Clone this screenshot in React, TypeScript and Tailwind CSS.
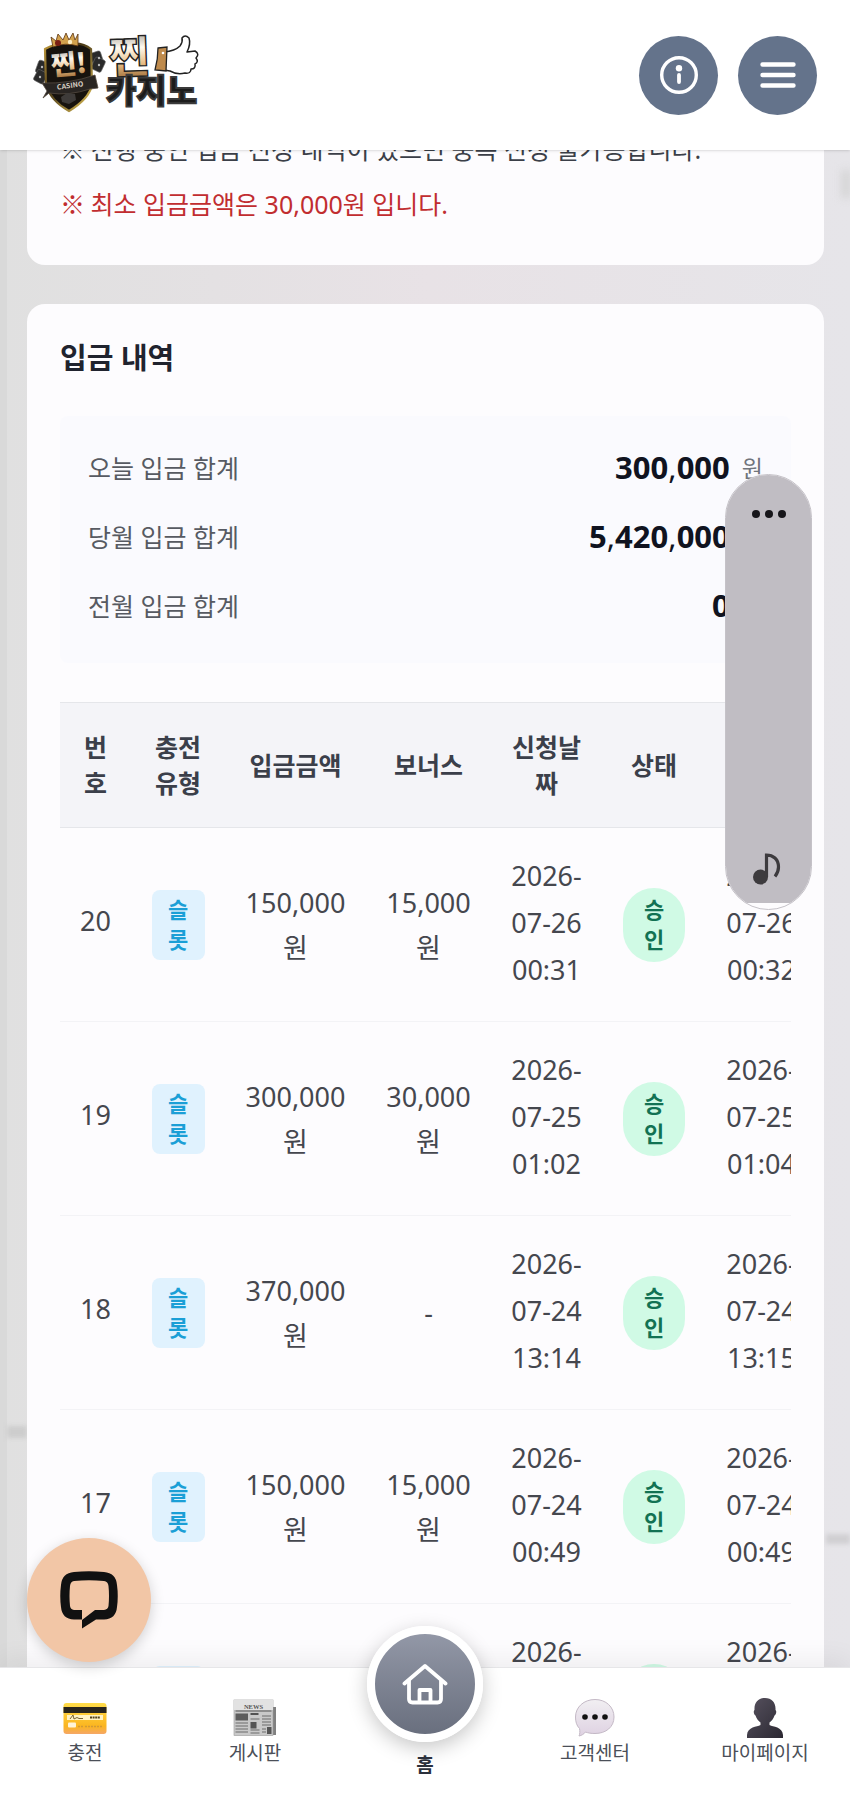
import type { ReactNode } from 'react'

const sans = "font-['Noto_Sans','Noto_Sans_CJK_KR',sans-serif]"
const heavy = "font-['Noto_Sans_CJK_KR',sans-serif]"

type Row = { no: number; amount: string; bonus: string; asked: string[]; done: string[] }

const rows: Row[] = [
  { no: 20, amount: '150,000', bonus: '15,000', asked: ['2026-', '07-26', '00:31'], done: ['2026-', '07-26', '00:32'] },
  { no: 19, amount: '300,000', bonus: '30,000', asked: ['2026-', '07-25', '01:02'], done: ['2026-', '07-25', '01:04'] },
  { no: 18, amount: '370,000', bonus: '', asked: ['2026-', '07-24', '13:14'], done: ['2026-', '07-24', '13:15'] },
  { no: 17, amount: '150,000', bonus: '15,000', asked: ['2026-', '07-24', '00:49'], done: ['2026-', '07-24', '00:49'] },
  { no: 16, amount: '150,000', bonus: '15,000', asked: ['2026-', '07-23', '00:21'], done: ['2026-', '07-23', '00:22'] },
]

const totals = [
  { label: '오늘 입금 합계', value: '300,000' },
  { label: '당월 입금 합계', value: '5,420,000' },
  { label: '전월 입금 합계', value: '0' },
]

function Logo() {
  return (
    <svg width="170" height="88" viewBox="0 0 170 88" role="img" aria-label="찐카지노">
      <defs>
        <linearGradient id="gold" x1="0" y1="0" x2="0" y2="1">
          <stop offset="0.2" stopColor="#b9b4ac" />
          <stop offset="0.4" stopColor="#fffaf0" />
          <stop offset="0.65" stopColor="#e6bd86" />
          <stop offset="0.9" stopColor="#9c6a35" />
        </linearGradient>
        <linearGradient id="rim" x1="0" y1="0" x2="1" y2="1">
          <stop offset="0" stopColor="#c09a3c" />
          <stop offset="0.4" stopColor="#4a3a17" />
          <stop offset="1" stopColor="#e6c65a" />
        </linearGradient>
      </defs>
      <g fill="#2a2a2a" stroke="#666" strokeWidth="0.6">
        <rect x="4" y="30" width="11" height="13" rx="2" transform="rotate(20 9 36)" />
        <rect x="2" y="40" width="11" height="12" rx="2" transform="rotate(28 8 46)" />
        <rect x="58" y="21" width="11" height="13" rx="2" transform="rotate(-18 63 27)" />
        <rect x="60" y="27" width="11" height="13" rx="2" transform="rotate(25 65 33)" />
      </g>
      <g fill="#bbb">
        <circle cx="9" cy="36" r="1.200" />
        <circle cx="7" cy="46" r="1.200" />
        <circle cx="66" cy="27" r="1.200" />
        <circle cx="66" cy="34" r="1.200" />
      </g>
      <path d="M12 18 Q24 11 36 13 Q50 11 58 18 L59 54 Q56 68 36 80 Q18 70 13 54 Z" fill="#17130e" stroke="url(#rim)" strokeWidth="2.200" />
      <path d="M20 16 L18 6 L23 10 L25 3 L30 9 L33 2 L36 9 L40 2 L42 9 L45 3 L45 15 Q32 11 20 16 Z" fill="#d3a24d" stroke="#5b3311" strokeWidth="0.8" />
      <circle cx="25" cy="12" r="3" fill="#7a1e14" />
      <circle cx="37" cy="11" r="2.200" fill="#fff0c5" />
      <text x="36" y="43" textAnchor="middle" fontSize="27" fontWeight="900" fill="url(#gold)" className={heavy} transform="rotate(-5 36 36)">찐!</text>
      <path d="M9 52 Q36 53 62 44 L65 57 L57 58 Q36 65 16 62 L10 67 L14 60 Z" fill="#292522" stroke="#544a40" strokeWidth="0.8" />
      <text x="37" y="57" textAnchor="middle" fontSize="7" fontWeight="700" fill="#d8cfc2" className={heavy} transform="rotate(-8 37 54)">CASINO</text>
      <path d="M28 66 L34 62 L42 63 L43 69 L36 73 L29 71 Z" fill="#3e3b39" />
      <text x="76" y="42" fontSize="44" fontWeight="900" fill="url(#gold)" stroke="#222" strokeWidth="1.400" className={heavy} transform="rotate(-2 97 25)">찐</text>
      <g transform="translate(0 3)">
        <path d="M131 18 Q142 17 147 12 Q150 8 149 4 Q152 0 156 4 Q158 10 154 18 L162 17 Q167 20 163 24 Q166 28 162 30 Q163 35 158 35 Q158 40 152 39 Q144 41 137 37 L131 36 Z" fill="#fff" stroke="#222" strokeWidth="1.500" strokeLinejoin="round" />
        <path d="M125 14 L134 13 L133 37 L122 36 Q125 25 125 14 Z" fill="#be8a4c" stroke="#222" strokeWidth="1.300" />
        <circle cx="130" cy="19" r="1.300" fill="#fff" />
      </g>
      <text x="73" y="72" fontSize="33" fontWeight="900" fill="#1c1c1c" stroke="#3a3a3a" strokeWidth="1.800" className={heavy}>카지노</text>
    </svg>
  )
}

function InfoIcon() {
  return (
    <svg width="40" height="40" viewBox="0 0 40 40" fill="none" stroke="#fff" aria-hidden="true">
      <circle cx="20" cy="20" r="17.3" strokeWidth="3.4" />
      <circle cx="20" cy="13.2" r="3.2" fill="#fff" stroke="none" />
      <path d="M20 20 V27" strokeWidth="3.8" strokeLinecap="round" />
    </svg>
  )
}

function MenuIcon() {
  return (
    <svg width="36" height="28" viewBox="0 0 36 28" stroke="#fff" strokeWidth="4.4" strokeLinecap="round" aria-hidden="true">
      <path d="M2.5 3.5 H33.5 M2.5 14 H33.5 M2.5 24.5 H33.5" />
    </svg>
  )
}

function CardIcon() {
  return (
    <svg width="44" height="40" viewBox="0 0 44 40" aria-hidden="true">
      <defs>
        <linearGradient id="card" x1="0" y1="0" x2="0" y2="1">
          <stop offset="0" stopColor="#ffdc4a" />
          <stop offset="0.75" stopColor="#fbb51f" />
          <stop offset="1" stopColor="#f5a768" />
        </linearGradient>
      </defs>
      <rect x="0.5" y="5" width="43" height="31" rx="3" fill="url(#card)" />
      <rect x="0.5" y="9" width="43" height="6" fill="#28241c" />
      <rect x="4" y="17" width="36" height="5" fill="#fff2c4" />
      <path d="M7 21 l3-4 l1 4 l3-1.5 l2 1 h4" fill="none" stroke="#6b5523" strokeWidth="0.9" />
      <path d="M27 19.5 h10" stroke="#54431c" strokeWidth="2" strokeDasharray="2 0.6" />
      <rect x="5" y="24.5" width="8" height="5" rx="1" fill="#fff4d8" />
      <path d="M15 28.5 h5 M22 28.5 h18" stroke="#d39a35" strokeWidth="1.6" strokeDasharray="2 1" />
    </svg>
  )
}

function NewsIcon() {
  return (
    <svg width="44" height="40" viewBox="0 0 44 40" aria-hidden="true">
      <path d="M37 9 h6 v28 h-6 z" fill="#808080" />
      <rect x="1" y="2" width="39" height="35.5" fill="#c9c9c9" stroke="#9a9a9a" strokeWidth="0.6" />
      <rect x="1" y="2" width="39" height="10" fill="#e2e2e2" />
      <text x="20.500" y="10.500" textAnchor="middle" fontSize="6.500" fontWeight="700" fill="#555" className="font-['Liberation_Serif',serif]">NEWS</text>
      <path d="M2.500 13 h36" stroke="#555" strokeWidth="1.2" />
      <rect x="2.500" y="15.500" width="12.500" height="7" fill="#5d5d5d" />
      <path d="M2.500 25 h12.500 M2.500 28 h12.500 M2.500 31 h12.500 M2.500 34 h12.500 M17.500 21 h9 M17.500 32 h9 M17.500 35 h9 M29 18 h9 M29 21 h9 M29 24 h9 M29 27 h9 M29 31 h4 M29 34 h4" stroke="#8b8b8b" strokeWidth="1.4" />
      <path d="M17.500 16 h8" stroke="#444" strokeWidth="1.8" />
      <rect x="17.500" y="24" width="6" height="6.500" fill="#555" />
      <rect x="34" y="29" width="4.500" height="7" fill="#555" />
    </svg>
  )
}

function TalkIcon() {
  return (
    <svg width="44" height="40" viewBox="0 0 44 40" aria-hidden="true">
      <defs>
        <linearGradient id="talk" x1="0" y1="0" x2="0" y2="1">
          <stop offset="0" stopColor="#f1eff2" />
          <stop offset="1" stopColor="#dfd2e2" />
        </linearGradient>
      </defs>
      <path d="M22 1.500 C33 1.500 41 9 41 19 C41 29 33 35.500 22 35.500 C18 35.500 15 35 12.500 34 C11 36 8.500 37.500 6 38 C7 36 7 33 6.500 30.500 C3.500 27.500 2.500 23.500 2.500 19 C2.500 9 11 1.500 22 1.500 Z" fill="url(#talk)" stroke="#c4b9c6" strokeWidth="1" />
      <circle cx="12" cy="19" r="2.800" fill="#111" />
      <circle cx="22" cy="19" r="2.800" fill="#111" />
      <circle cx="32" cy="19" r="2.800" fill="#111" />
    </svg>
  )
}

function PersonIcon() {
  return (
    <svg width="44" height="40" viewBox="0 0 44 40" aria-hidden="true">
      <defs>
        <linearGradient id="person" x1="0" y1="0" x2="1" y2="1">
          <stop offset="0" stopColor="#57525f" />
          <stop offset="1" stopColor="#2b2832" />
        </linearGradient>
      </defs>
      <path d="M22 0 C29 0 33 5 32.500 12 C34 13 33 17 31.500 17.500 C30.500 21 28.500 23 26.500 24.500 V27 C30 29 39.500 28.500 40 37 V40 H4 V37 C4.500 28.500 14 29 17.500 27 V24.500 C15.500 23 13.500 21 12.500 17.500 C11 17 10 13 11.500 12 C11 5 15 0 22 0 Z" fill="url(#person)" />
    </svg>
  )
}

function HomeIcon() {
  return (
    <svg width="46" height="42" viewBox="0 0 46 42" fill="none" stroke="#fff" strokeWidth="3.800" strokeLinecap="round" strokeLinejoin="round" aria-hidden="true">
      <path d="M2.500 20.500 L23 3 L43.500 20.500" />
      <path d="M7 18 V36 Q7 39.500 10.500 39.500 H35.500 Q39 39.500 39 36 V18" />
      <path d="M17.500 39 V27 H28.500 V39" />
    </svg>
  )
}

function ChatIcon() {
  return (
    <svg width="58" height="58" viewBox="0 0 58 58" aria-hidden="true">
      <path fill="#111" d="M22 39 H14 Q10.500 38.500 10 35 Q9 25 10 15 Q10.500 10.500 14 10 Q29 8.500 44 10 Q48 10.500 48.500 15 Q49.500 25 48.500 35 Q48 38.500 44 39 H35 L22 49 V57.500 L36 48.500 H44 Q56 48 57 36 Q58.500 25 57 14 Q56 2 44 1 Q29 -0.500 14 1 Q2 2 1 14 Q-0.500 25 1 36 Q2 48 14 48.500 H22 Z" />
    </svg>
  )
}

function NoteIcon() {
  return (
    <svg width="32" height="32" viewBox="0 0 32 32" aria-hidden="true">
      <circle cx="7.500" cy="24" r="7.500" fill="#3d3b3e" />
      <path d="M13.500 24 V2 C20 2 25.500 6 25.500 14 C25.500 18 24 21 22 23.500" fill="none" stroke="#3d3b3e" strokeWidth="3.200" />
    </svg>
  )
}

function Money({ value }: { value: string }) {
  return (
    <span className="pb-[3px] text-[31px] font-bold text-[#101320]">
      {value.split(',').map((part, i) => (
        <span key={i}>
          {i > 0 && <span className="font-normal">,</span>}
          {part}
        </span>
      ))}
    </span>
  )
}

function Amount({ value }: { value: string }) {
  return value ? (
    <>
      {value}
      <br />원
    </>
  ) : (
    <>-</>
  )
}

function Stamp({ lines }: { lines: string[] }) {
  return (
    <>
      {lines.map((line) => (
        <span key={line} className="block leading-[47px]">{line}</span>
      ))}
    </>
  )
}

function NavItem({ label, children }: { label: string; children: ReactNode }) {
  return (
    <a href="#" className="flex flex-col items-center pt-[30px] text-[19px] leading-[30px] text-[#4b4f58]">
      {children}
      <span>{label}</span>
    </a>
  )
}

export default function App() {
  return (
    <div className={`relative flex h-screen flex-col overflow-hidden bg-linear-to-r from-[#e0e0e0] via-[#e8e2e6] to-[#e6e5e9] ${sans}`}>
      <div className="absolute inset-y-0 left-0 w-[7px] bg-[#d9d9d9]" />
      <div className="absolute bottom-[360px] left-[7px] h-3 w-5 bg-[#cdcdcd] blur-[2px]" />
      <div className="absolute right-0 bottom-[254px] h-[10px] w-6 bg-[#d0cfd2] blur-[2px]" />
      <div className="absolute top-[170px] right-0 h-7 w-2 bg-[#d2d2d2] blur-[4px]" />

      <header className="z-20 flex h-[150px] shrink-0 items-center justify-between bg-white px-[33px] shadow-sm">
        <a href="#" aria-label="찐카지노">
          <Logo />
        </a>
        <div className="flex gap-5">
          <button type="button" aria-label="안내" className="flex size-[79px] items-center justify-center rounded-full bg-[#64738b]">
            <InfoIcon />
          </button>
          <button type="button" aria-label="메뉴" className="flex size-[79px] items-center justify-center rounded-full bg-[#64738b]">
            <MenuIcon />
          </button>
        </div>
      </header>

      <main className="relative flex min-h-0 flex-1 flex-col justify-start gap-[39px] overflow-hidden pr-[26px] pl-[27px]">
        <section className="flex h-[115px] shrink-0 flex-col justify-end rounded-b-[18px] bg-[#fdfcfe] px-[33px] pb-[34px] text-[25px] leading-[54px]">
          <p className="whitespace-nowrap text-[#3b3f48]"><span className={heavy}>※ </span> 진행 중인 입금 신청 내역이 있으면 중복 신청 불가능합니다.</p>
          <p className="whitespace-nowrap text-[#c12d30]"><span className={heavy}>※ </span> 최소 입금금액은 30,000원 입니다.</p>
        </section>

        <section className="shrink-0 rounded-t-[18px] bg-[#fdfcfe] px-[33px] pt-8">
          <h2 className="text-[29px] leading-[44px] font-bold text-[#20232e]">입금 내역</h2>
          <dl className="mt-9 rounded-lg bg-[#fafafe] px-7 pt-[18px] pb-[22px]">
            {totals.map((t) => (
              <div key={t.label} className="flex h-[69px] items-center justify-between">
                <dt className="text-[25px] text-[#575a62]">{t.label}</dt>
                <dd className="flex items-center gap-3">
                  <Money value={t.value} />
                  <span className="text-[23px] text-[#70747c]">원</span>
                </dd>
              </div>
            ))}
          </dl>

          <div className="mt-[39px] overflow-hidden">
            <table className="w-full min-w-[757px] table-fixed border-collapse text-center">
              <colgroup>
                <col className="w-[71px]" />
                <col className="w-[94px]" />
                <col className="w-[141px]" />
                <col className="w-[125px]" />
                <col className="w-[111px]" />
                <col className="w-[104px]" />
                <col className="w-[111px]" />
              </colgroup>
              <thead>
                <tr className="h-[125px] border-y border-[#e5e6ea] bg-[#f4f4f8] text-[25px] leading-[36px] text-[#3b3f4a]">
                  <th>번<br />호</th>
                  <th>충전<br />유형</th>
                  <th>입금금액</th>
                  <th>보너스</th>
                  <th>신청날<br />짜</th>
                  <th>상태</th>
                  <th>처리날<br />짜</th>
                </tr>
              </thead>
              <tbody>
                {rows.map((r) => (
                  <tr key={r.no} className="h-[194px] border-b border-[#f3f3f6] text-[27px] leading-[45px] text-[#45474e]">
                    <td className="pb-2">{r.no}</td>
                    <td>
                      <span className="mx-auto flex w-[53px] flex-col rounded-lg bg-[#e0f2fe] pt-1 pb-[6px] text-[22px] leading-[30px] font-bold text-[#1b9fd6]">
                        <span>슬</span>
                        <span>롯</span>
                      </span>
                    </td>
                    <td><Amount value={r.amount} /></td>
                    <td><Amount value={r.bonus} /></td>
                    <td className="pb-1"><Stamp lines={r.asked} /></td>
                    <td>
                      <span className="mx-auto flex w-[62px] flex-col rounded-[31px] bg-[#d0fae5] pt-[6px] pb-2 text-[22px] leading-[30px] font-bold text-[#127253]">
                        <span>승</span>
                        <span>인</span>
                      </span>
                    </td>
                    <td className="pb-1"><Stamp lines={r.done} /></td>
                  </tr>
                ))}
              </tbody>
            </table>
          </div>
        </section>
      </main>

      <nav className="z-20 grid h-[131px] shrink-0 grid-cols-5 border-t border-[#e6e6e8] bg-white shadow-[0_-8px_24px_rgba(0,0,0,0.06)]">
        <NavItem label="충전"><CardIcon /></NavItem>
        <NavItem label="게시판"><NewsIcon /></NavItem>
        <a href="#" className="-mt-[42px] flex flex-col items-center gap-[9px] text-[19px] leading-[28px] font-bold text-[#2b303c]">
          <span className="flex size-[116px] items-center justify-center rounded-full border-8 border-white bg-linear-to-b from-[#969baa] to-[#666c7b] bg-origin-border shadow-[0_6px_20px_rgba(0,0,0,0.22)]">
            <HomeIcon />
          </span>
          <span>홈</span>
        </a>
        <NavItem label="고객센터"><TalkIcon /></NavItem>
        <NavItem label="마이페이지"><PersonIcon /></NavItem>
      </nav>

      <div className="absolute top-[474px] right-[38px] z-30 h-[436px] w-[87px] overflow-hidden rounded-[44px] border border-[#c5c2c8] bg-[#fdfcfe]">
        <div className="flex h-[428px] flex-col items-center justify-between bg-[#c0bdc3] pt-[35px] pb-[18px]">
          <button type="button" aria-label="더보기" className="flex gap-[5px]">
            <span className="size-2 rounded-full bg-[#17161a]" />
            <span className="size-2 rounded-full bg-[#17161a]" />
            <span className="size-2 rounded-full bg-[#17161a]" />
          </button>
          <button type="button" aria-label="음악">
            <NoteIcon />
          </button>
        </div>
      </div>

      <button type="button" aria-label="상담 채팅" className="absolute bottom-[136px] left-[27px] z-30 flex size-[124px] items-center justify-center rounded-full bg-[#f2c6a6] shadow-[0_4px_14px_rgba(0,0,0,0.18)]">
        <ChatIcon />
      </button>
    </div>
  )
}
